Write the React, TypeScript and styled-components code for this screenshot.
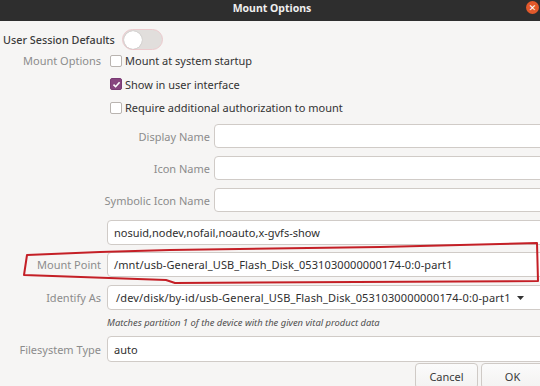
import styled, { createGlobalStyle } from 'styled-components';

const GlobalStyle = createGlobalStyle`
  html, body {
    margin: 0;
    padding: 0;
    background: #f6f5f4;
  }
  body {
    font-family: "Noto Sans", "DejaVu Sans", sans-serif;
  }
`;

const Window = styled.div`
  position: relative;
  width: 540px;
  height: 386px;
  overflow: hidden;
  background: #f6f5f4;
`;

const TitleBar = styled.div`
  position: relative;
  height: 21px;
  background: #2e2e2e;
  display: flex;
  justify-content: center;
  align-items: flex-start;
`;

const Title = styled.span`
  color: #efefef;
  font-size: 10.5px;
  font-weight: 700;
  line-height: 16px;
  margin-left: 4px;
`;

const CloseButton = styled.div`
  position: absolute;
  left: 526px;
  top: 1px;
  width: 13px;
  height: 13px;
  border-radius: 50%;
  background: #e2592b;
  color: #fff;
  font-size: 9px;
  line-height: 13px;
  text-align: center;
`;

const Body = styled.div`
  width: 544px;
  padding-top: 8px;
`;

const DefaultsRow = styled.div`
  display: flex;
  align-items: center;
  gap: 7px;
  height: 21px;
  padding-left: 3px;
`;

const Heading = styled.span`
  font-size: 10.8px;
  font-weight: 500;
  color: #3c3c3c;
`;

const Switch = styled.div`
  box-sizing: border-box;
  width: 41px;
  height: 21px;
  border-radius: 11px;
  border: 1px solid #eccacd;
  background: #e1dedc;
  display: flex;
  align-items: center;
  padding: 0 1px;
`;

const Knob = styled.div`
  width: 18px;
  height: 18px;
  border-radius: 50%;
  background: #ffffff;
  box-shadow: 0 0 1px rgba(0, 0, 0, 0.35);
`;

const FieldRow = styled.div<{ $mt?: number; $align?: string }>`
  display: flex;
  align-items: ${(p) => p.$align ?? 'stretch'};
  gap: 6px;
  margin-top: ${(p) => p.$mt ?? 0}px;
`;

const Label = styled.div<{ $w?: number }>`
  flex: none;
  width: ${(p) => p.$w ?? 101}px;
  text-align: right;
  font-size: 11px;
  color: #8c8c8c;
  display: flex;
  align-items: center;
  justify-content: flex-end;
  white-space: nowrap;
`;

const TopLabel = styled(Label)`
  align-items: flex-start;
  line-height: 13px;
  padding-top: 4px;
`;

const CheckList = styled.div`
  display: flex;
  flex-direction: column;
  gap: 10.5px;
  padding-top: 4px;
  padding-left: 3px;
`;

const CheckRow = styled.label`
  display: flex;
  align-items: center;
  gap: 3px;
  height: 13px;
  font-size: 11px;
  color: #333;
`;

const Box = styled.span<{ $checked?: boolean }>`
  box-sizing: border-box;
  width: 12px;
  height: 12px;
  border-radius: 2px;
  border: 1px solid ${(p) => (p.$checked ? '#7a3a74' : '#b9b4b0')};
  background: ${(p) => (p.$checked ? '#87457f' : '#ffffff')};
  display: flex;
  align-items: center;
  justify-content: center;
`;

const NameGrid = styled.div`
  flex: 1;
  display: grid;
  grid-template-columns: 103px 1fr;
  column-gap: 4px;
  row-gap: 8px;
  margin-top: 10px;
`;

const Entry = styled.div<{ $h?: number }>`
  box-sizing: border-box;
  flex: 1;
  height: ${(p) => p.$h ?? 25}px;
  border: 1px solid #d0cbc7;
  border-radius: 4px;
  background: #ffffff;
  padding: 0 6px;
  display: flex;
  align-items: center;
  font-size: 11px;
  color: #2f2f2f;
  white-space: nowrap;
  overflow: hidden;
`;

const PathText = styled.span<{ $ls?: number }>`
  letter-spacing: ${(p) => p.$ls ?? 0}px;
`;

const Combo = styled(Entry)`
  justify-content: flex-start;
  padding: 0 8px;
`;

const Arrow = styled.svg`
  flex: none;
  margin-left: 6px;
`;

const Hint = styled.div`
  height: 26px;
  line-height: 26px;
  font-size: 9.4px;
  font-style: italic;
  color: #4f4f4f;
  white-space: nowrap;
`;

const Spacer = styled.div`
  flex: none;
  width: 101px;
`;

const ButtonRow = styled.div`
  display: flex;
  justify-content: flex-end;
  gap: 3px;
  margin-top: 1px;
`;

const Button = styled.button`
  box-sizing: border-box;
  width: 63px;
  height: 26px;
  border: 1px solid #cfcac6;
  border-radius: 4px;
  background: linear-gradient(#fbfbfb, #f3f2f1);
  font-family: inherit;
  font-size: 11px;
  color: #3a3a3a;
  padding: 0;
`;

const Annotation = styled.svg`
  position: absolute;
  left: 0;
  top: 0;
  pointer-events: none;
`;

const CheckMark = () => (
  <svg width="9" height="9" viewBox="0 0 9 9">
    <path d="M1.5 4.6 L3.6 6.7 L7.6 2.2" fill="none" stroke="#fff" strokeWidth="1.6" />
  </svg>
);

const App = () => {
  return (
    <Window>
      <GlobalStyle />
      <TitleBar>
        <Title>Mount Options</Title>
        <CloseButton>✕</CloseButton>
      </TitleBar>
      <Body>
        <DefaultsRow>
          <Heading>User Session Defaults</Heading>
          <Switch>
            <Knob />
          </Switch>
        </DefaultsRow>

        <FieldRow $align="flex-start">
          <TopLabel>Mount Options</TopLabel>
          <CheckList>
            <CheckRow>
              <Box />
              Mount at system startup
            </CheckRow>
            <CheckRow>
              <Box $checked>
                <CheckMark />
              </Box>
              Show in user interface
            </CheckRow>
            <CheckRow>
              <Box />
              Require additional authorization to mount
            </CheckRow>
          </CheckList>
        </FieldRow>

        <FieldRow>
          <Spacer />
          <NameGrid>
            <Label $w={103}>Display Name</Label>
            <Entry $h={24} />
            <Label $w={103}>Icon Name</Label>
            <Entry $h={24} />
            <Label $w={103}>Symbolic Icon Name</Label>
            <Entry $h={24} />
          </NameGrid>
        </FieldRow>

        <FieldRow $mt={8}>
          <Spacer />
          <Entry>nosuid,nodev,nofail,noauto,x-gvfs-show</Entry>
        </FieldRow>

        <FieldRow $mt={7}>
          <Label>Mount Point</Label>
          <Entry>
            <PathText $ls={0.1}>/mnt/usb-General_USB_Flash_Disk_0531030000000174-0:0-part1</PathText>
          </Entry>
        </FieldRow>

        <FieldRow $mt={8}>
          <Label>Identify As</Label>
          <Combo>
            <PathText $ls={0.15}>/dev/disk/by-id/usb-General_USB_Flash_Disk_0531030000000174-0:0-part1</PathText>
            <Arrow width="7" height="4" viewBox="0 0 7 4">
              <path d="M0 0 L7 0 L3.5 4 Z" fill="#333" />
            </Arrow>
          </Combo>
        </FieldRow>

        <FieldRow>
          <Spacer />
          <Hint>Matches partition 1 of the device with the given vital product data</Hint>
        </FieldRow>

        <FieldRow>
          <Label>Filesystem Type</Label>
          <Entry $h={26}>auto</Entry>
        </FieldRow>

        <ButtonRow>
          <Button>Cancel</Button>
          <Button>OK</Button>
        </ButtonRow>
      </Body>

      <Annotation width="540" height="386" viewBox="0 0 540 386">
        <path
          d="M27 255 L100 252 L170 250 L380 247 L537 243 L538 281 L175 283 L166 280 L24 275 Z"
          fill="none"
          stroke="#c41f26"
          strokeWidth="2"
          strokeLinejoin="round"
        />
      </Annotation>
    </Window>
  );
};

export default App;
